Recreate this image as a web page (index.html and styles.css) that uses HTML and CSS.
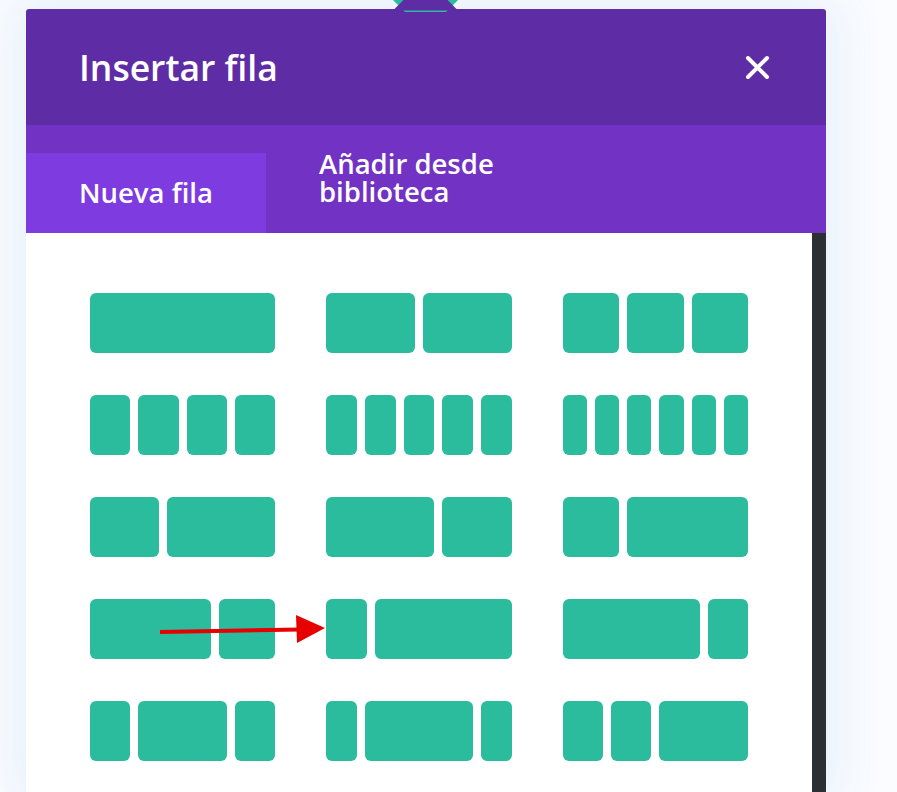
FILE: index.html
```html
<!DOCTYPE html>
<html>
    <head>
    <title>Insertar fila</title>
    <meta name="viewport" content="width=device-width, initial-scale=1">
    <link rel="stylesheet" href="styles.css">
    </head>
    <body>
        <div class="modal">
            <!-- purple pointer over the teal add button -->
            <svg class="pointer" width="90" height="12" viewBox="380 0 90 12">
                <polygon points="425.5,-32.5 458,0 425.5,32.5 393,0" fill="#2bbb9d"/>
                <polygon points="425.5,-22 458,10.5 393,10.5" fill="#5e2ca5"/>
            </svg>

            <div class="modalHeader">
                <h2 class="modalTitle">Insertar fila</h2>
                <button class="closeBtn" title="Cerrar">
                    <svg width="25" height="25" viewBox="0 0 25 25">
                        <path d="M3 3 L22 22 M22 3 L3 22" stroke="#fff" stroke-width="4" stroke-linecap="round"/>
                    </svg>
                </button>
            </div>

            <div class="tabBar">
                <div class="tabBtn active">Nueva fila</div>
                <div class="tabBtn tabBtnTall">Añadir desde<br>biblioteca</div>
            </div>

            <div class="modalBody">
                <div class="layouts">
                    <!-- row 1 -->
                    <div class="layout"><span class="col c-1"></span></div>
                    <div class="layout"><span class="col c-1-2"></span><span class="col c-1-2"></span></div>
                    <div class="layout"><span class="col c-1-3"></span><span class="col c-1-3"></span><span class="col c-1-3"></span></div>
                    <!-- row 2 -->
                    <div class="layout"><span class="col c-1-4"></span><span class="col c-1-4"></span><span class="col c-1-4"></span><span class="col c-1-4"></span></div>
                    <div class="layout"><span class="col c-1-5"></span><span class="col c-1-5"></span><span class="col c-1-5"></span><span class="col c-1-5"></span><span class="col c-1-5"></span></div>
                    <div class="layout"><span class="col c-1-6"></span><span class="col c-1-6"></span><span class="col c-1-6"></span><span class="col c-1-6"></span><span class="col c-1-6"></span><span class="col c-1-6"></span></div>
                    <!-- row 3 -->
                    <div class="layout"><span class="col c-2-5"></span><span class="col c-3-5"></span></div>
                    <div class="layout"><span class="col c-3-5"></span><span class="col c-2-5"></span></div>
                    <div class="layout"><span class="col c-1-3"></span><span class="col c-2-3"></span></div>
                    <!-- row 4 -->
                    <div class="layout"><span class="col c-2-3"></span><span class="col c-1-3"></span></div>
                    <div class="layout"><span class="col c-1-4"></span><span class="col c-3-4"></span></div>
                    <div class="layout"><span class="col c-3-4"></span><span class="col c-1-4"></span></div>
                    <!-- row 5 -->
                    <div class="layout"><span class="col c-1-4"></span><span class="col c-1-2"></span><span class="col c-1-4"></span></div>
                    <div class="layout"><span class="col c-1-5"></span><span class="col c-3-5"></span><span class="col c-1-5"></span></div>
                    <div class="layout"><span class="col c-1-4"></span><span class="col c-1-4"></span><span class="col c-1-2"></span></div>
                </div>
                <div class="scrollTrack"></div>
            </div>

            <!-- annotation arrow -->
            <svg class="annotArrow" width="897" height="792" viewBox="0 0 897 792">
                <line x1="160" y1="632" x2="300" y2="629.5" stroke="#e60000" stroke-width="4"/>
                <polygon points="296,615 325,628 297,643" fill="#e60000"/>
            </svg>
        </div>
    </body>
</html>
```

FILE: styles.css
```css
        html, body
        {
            height: 100%;
            overflow: hidden;
        }

        body
        {
            margin: 0;
            background: #fafcff;
            font-family: "Open Sans", "Noto Sans", sans-serif;
        }

        .modal
        {
            position: relative;
            margin: 9px 0 0 26px;
            width: 800px;
            height: 783px;
            display: flex;
            flex-direction: column;
            background: #fff;
            border-radius: 3px 3px 0 0;
            box-shadow: 0 0 50px 12px rgba(60, 120, 210, 0.09);
        }

        .pointer
        {
            position: absolute;
            left: 354px;
            top: -9px;
        }

        .modalHeader
        {
            height: 116px;
            flex: none;
            display: flex;
            align-items: center;
            justify-content: space-between;
            padding: 0 56px 0 53px;
            background: #5e2ca5;
            border-radius: 3px 3px 0 0;
        }

        .modalTitle
        {
            margin: 0;
            color: #fff;
            font-size: 35.5px;
            font-weight: 600;
            line-height: 40px;
        }

        .closeBtn
        {
            background: none;
            border: none;
            padding: 0;
            cursor: pointer;
            display: flex;
        }

        .tabBar
        {
            height: 108px;
            flex: none;
            box-sizing: border-box;
            padding-top: 28px;
            display: flex;
            align-items: flex-start;
            background: #7233c4;
        }

        .tabBtn
        {
            box-sizing: border-box;
            padding: 26px 53px;
            color: #fff;
            font-size: 27.5px;
            font-weight: 600;
            line-height: 28px;
            cursor: pointer;
        }

        .tabBtn.active
        {
            width: 240px;
            height: 80px;
            background: #7e3be0;
        }

        .tabBtnTall
        {
            padding-top: 0;
            margin-top: -3px;
        }

        .modalBody
        {
            flex: 1;
            display: flex;
            min-height: 0;
        }

        .layouts
        {
            flex: 1;
            align-self: flex-start;
            display: grid;
            grid-template-columns: repeat(3, 1fr);
            column-gap: 51px;
            row-gap: 42px;
            padding: 60px 64px;
        }

        .scrollTrack
        {
            width: 14px;
            flex: none;
            background: #2c2f33;
        }

        .layout
        {
            display: flex;
            gap: 8px;
            height: 60px;
            cursor: pointer;
        }

        .col
        {
            flex: none;
            height: 100%;
            background: #2bbb9d;
            border-radius: 6px;
        }

        .c-1   { width: 100%; }
        .c-1-2 { width: calc((100% + 8px) / 2 - 8px); }
        .c-1-3 { width: calc((100% + 8px) / 3 - 8px); }
        .c-2-3 { width: calc((100% + 8px) * 2 / 3 - 8px); }
        .c-1-4 { width: calc((100% + 8px) / 4 - 8px); }
        .c-3-4 { width: calc((100% + 8px) * 3 / 4 - 8px); }
        .c-1-5 { width: calc((100% + 8px) / 5 - 8px); }
        .c-2-5 { width: calc((100% + 8px) * 2 / 5 - 8px); }
        .c-3-5 { width: calc((100% + 8px) * 3 / 5 - 8px); }
        .c-1-6 { width: calc((100% + 8px) / 6 - 8px); }

        .annotArrow
        {
            position: absolute;
            left: -26px;
            top: -9px;
            pointer-events: none;
        }
```
